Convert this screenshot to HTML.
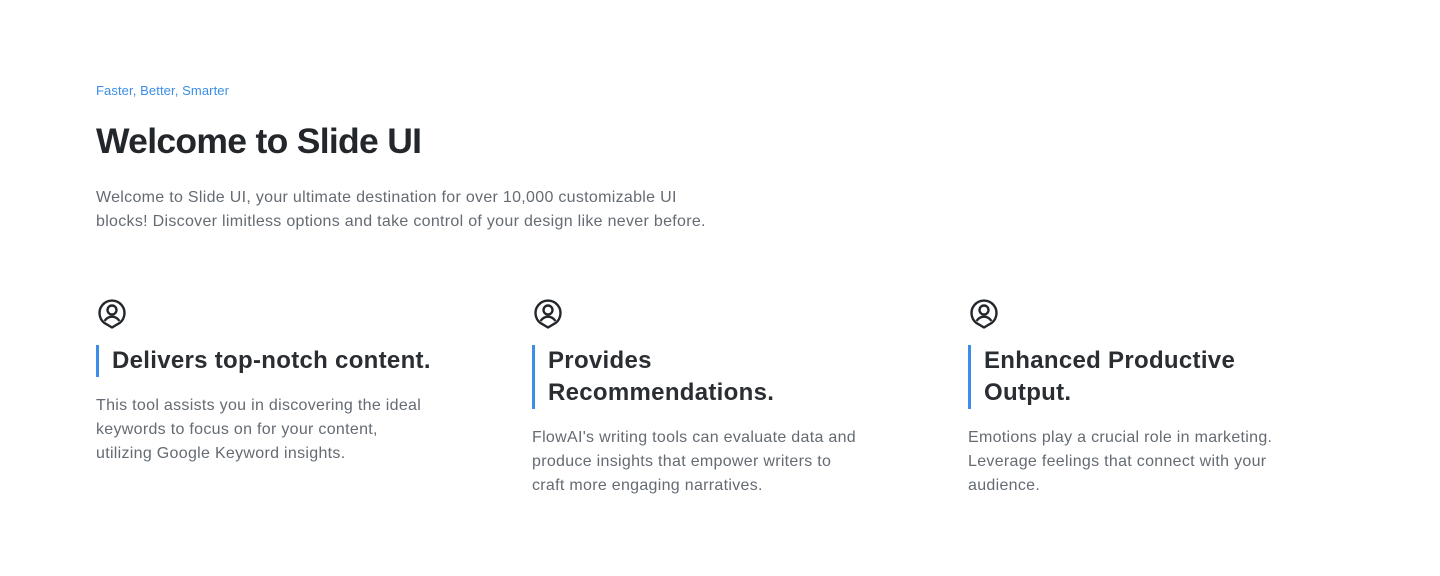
<!DOCTYPE html>
<html><head><style>
body{margin:0;width:1440px;height:576px;background:#fff;font-family:"Liberation Sans",sans-serif;overflow:hidden}
.wrap{position:absolute;left:96px;top:0;width:1248px}
.tag{position:absolute;top:83px;font-size:13px;color:#3a8ee6;letter-spacing:0.1px}
h1{position:absolute;top:121px;margin:0;font-size:35.5px;font-weight:600;color:#23272b;letter-spacing:-0.7px;white-space:nowrap}
.intro{position:absolute;top:186px;width:630px;font-size:16px;letter-spacing:0.3px;line-height:24px;color:#646b73}
.card{position:absolute;top:297px;width:360px}
.card svg{display:block}
.card h3{margin:16px 0 0;border-left:3px solid #3a8ee6;padding-left:13px;font-size:24px;letter-spacing:0.3px;line-height:32px;font-weight:600;color:#2a2e33}
.card p{margin:17px 0 0;width:330px;font-size:16px;letter-spacing:0.3px;line-height:24px;color:#646b73}
</style></head><body>
<div class="wrap">
<div class="tag">Faster, Better, Smarter</div>
<h1>Welcome to Slide UI</h1>
<div class="intro">Welcome to Slide UI, your ultimate destination for over 10,000 customizable UI blocks! Discover limitless options and take control of your design like never before.</div>
<div class="card" style="left:0">
<svg width="32" height="32" viewBox="0 0 32 32" fill="none" stroke="#23272b" stroke-width="2.4"><path d="M11 27.5A12.5 12.5 0 1 1 21 27.5L16 30.5Z" stroke-linejoin="round"/><circle cx="16" cy="13" r="4.5"/><path d="M8.5 24c2-3 4.5-4.3 7.5-4.3s5.5 1.3 7.5 4.3"/></svg>
<h3>Delivers top-notch content.</h3>
<p>This tool assists you in discovering the ideal keywords to focus on for your content, utilizing Google Keyword insights.</p>
</div>
<div class="card" style="left:436px">
<svg width="32" height="32" viewBox="0 0 32 32" fill="none" stroke="#23272b" stroke-width="2.4"><path d="M11 27.5A12.5 12.5 0 1 1 21 27.5L16 30.5Z" stroke-linejoin="round"/><circle cx="16" cy="13" r="4.5"/><path d="M8.5 24c2-3 4.5-4.3 7.5-4.3s5.5 1.3 7.5 4.3"/></svg>
<h3>Provides<br>Recommendations.</h3>
<p>FlowAI's writing tools can evaluate data and produce insights that empower writers to craft more engaging narratives.</p>
</div>
<div class="card" style="left:872px">
<svg width="32" height="32" viewBox="0 0 32 32" fill="none" stroke="#23272b" stroke-width="2.4"><path d="M11 27.5A12.5 12.5 0 1 1 21 27.5L16 30.5Z" stroke-linejoin="round"/><circle cx="16" cy="13" r="4.5"/><path d="M8.5 24c2-3 4.5-4.3 7.5-4.3s5.5 1.3 7.5 4.3"/></svg>
<h3>Enhanced Productive<br>Output.</h3>
<p>Emotions play a crucial role in marketing. Leverage feelings that connect with your audience.</p>
</div>
</div>
</body></html>
